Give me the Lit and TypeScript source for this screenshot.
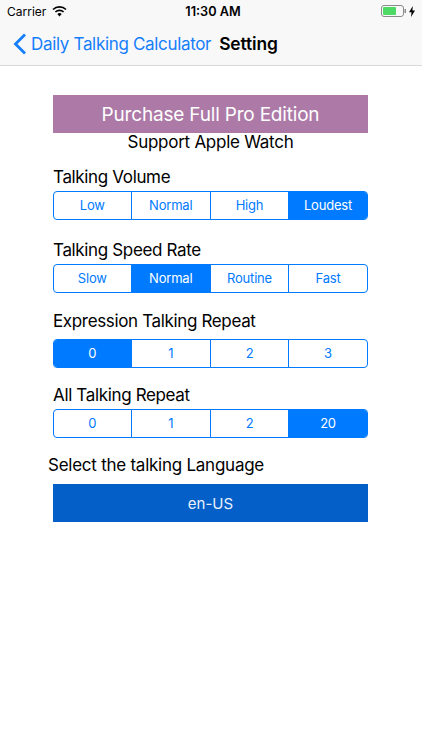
import { LitElement, html, css } from "lit";
import { customElement } from "lit/decorators.js";

const groups = [
  { label: "Talking Volume", top: 15, gap: 4, items: ["Low", "Normal", "High", "Loudest"], sel: 3 },
  { label: "Talking Speed Rate", top: 20, gap: 4, items: ["Slow", "Normal", "Routine", "Fast"], sel: 1 },
  { label: "Expression Talking Repeat", top: 18, gap: 8, items: ["0", "1", "2", "3"], sel: 0 },
  { label: "All Talking Repeat", top: 17, gap: 4, items: ["0", "1", "2", "20"], sel: 3 },
];

@customElement("app-root")
export class AppRoot extends LitElement {
  static styles = css`
    :host { display: block; width: 422px; height: 750px; background: #fff; overflow: hidden;
      font-family: Inter, "Liberation Sans", sans-serif; color: #000; }
    .head { height: 66px; box-sizing: border-box; background: #f8f8f8; border-bottom: 1px solid #d9d9d9; }
    .status { height: 22px; display: grid; grid-template-columns: 1fr auto 1fr; align-items: center; padding: 0 7px; font-size: 12px; }
    .left { display: flex; align-items: center; gap: 6px; }
    .time { font-weight: 600; font-size: 12.7px; margin-left: 4px; }
    .right { display: flex; justify-content: flex-end; align-items: center; gap: 3px; }
    .nav { height: 43px; display: flex; align-items: center; padding-left: 13px; }
    .back { color: #157efb; font-size: 17px; margin-left: 4px; letter-spacing: -0.33px; }
    .title { font-size: 17.4px; font-weight: 600; margin-left: 8px; letter-spacing: -0.1px; }
    .body { width: 315px; margin-left: 53px; padding-top: 29px; }
    .buy { height: 37.5px; box-sizing: border-box; padding-top: 1px; background: #ad7aa8; color: #fff; font-size: 19px; display: flex; align-items: center; justify-content: center; letter-spacing: -0.19px; }
    .watch { height: 19px; line-height: 19px; text-align: center; font-size: 17px; letter-spacing: -0.26px; }
    .label { font-size: 17px; line-height: 20px; letter-spacing: -0.35px; }
    .seg { display: grid; grid-template-columns: 76.5px 79.5px 78px 1fr; box-sizing: border-box; height: 29px;
      border: 1px solid #007aff; border-radius: 4px; overflow: hidden; color: #007aff; font-size: 13px; letter-spacing: -0.2px; }
    .seg div { display: flex; align-items: center; justify-content: center; border-left: 1px solid #007aff; }
    .seg div:first-child { border-left: 0; }
    .seg .on { background: #007aff; color: #fff; }
    .lang { margin-top: 9px; height: 38.5px; box-sizing: border-box; padding-top: 1px; background: #0460c8; color: #e8f0fa; font-size: 15px; display: flex; align-items: center; justify-content: center; }
    .sel { font-size: 17px; line-height: 20px; margin-left: -5px; margin-top: 17px; letter-spacing: -0.25px; }
  `;

  render() {
    return html`
      <div class="head">
        <div class="status">
          <div class="left">Carrier
            <svg width="15" height="11" viewBox="0 0 15 11">
              <path d="M7.5 10.5 L5.3 8 A3.2 3.2 0 0 1 9.7 8 Z" fill="#000"/>
              <path d="M3.4 6 A6 6 0 0 1 11.6 6" fill="none" stroke="#000" stroke-width="1.7"/>
              <path d="M1 3.5 A9.5 9.5 0 0 1 14 3.5" fill="none" stroke="#000" stroke-width="1.7"/>
            </svg>
          </div>
          <div class="time">11:30 AM</div>
          <div class="right">
            <svg width="25" height="12" viewBox="0 0 25 12">
              <rect x="0.5" y="0.5" width="22" height="11" rx="2.5" fill="none" stroke="#8a8a8a"/>
              <rect x="2" y="2" width="13" height="8" rx="1" fill="#4cd964"/>
              <rect x="23.5" y="4" width="1.5" height="4" fill="#8a8a8a"/>
            </svg>
            <svg width="6" height="11" viewBox="0 0 6 11"><path d="M3.8 0 L0 6.2 H2.5 L2 11 L6 4.5 H3.4 Z" fill="#000"/></svg>
          </div>
        </div>
        <div class="nav">
          <svg width="14" height="22" viewBox="0 0 14 22"><path d="M12 1.5 L2.5 11 L12 20.5" fill="none" stroke="#157efb" stroke-width="2.8"/></svg>
          <span class="back">Daily Talking Calculator</span>
          <span class="title">Setting</span>
        </div>
      </div>
      <div class="body">
        <div class="buy">Purchase Full Pro Edition</div>
        <div class="watch">Support Apple Watch</div>
        ${groups.map((g) => html`
          <div class="label" style="margin-top:${g.top}px;margin-bottom:${g.gap}px">${g.label}</div>
          <div class="seg">${g.items.map((t, i) => html`<div class=${i === g.sel ? "on" : ""}>${t}</div>`)}</div>
        `)}
        <div class="sel">Select the talking Language</div>
        <div class="lang">en-US</div>
      </div>
    `;
  }
}
